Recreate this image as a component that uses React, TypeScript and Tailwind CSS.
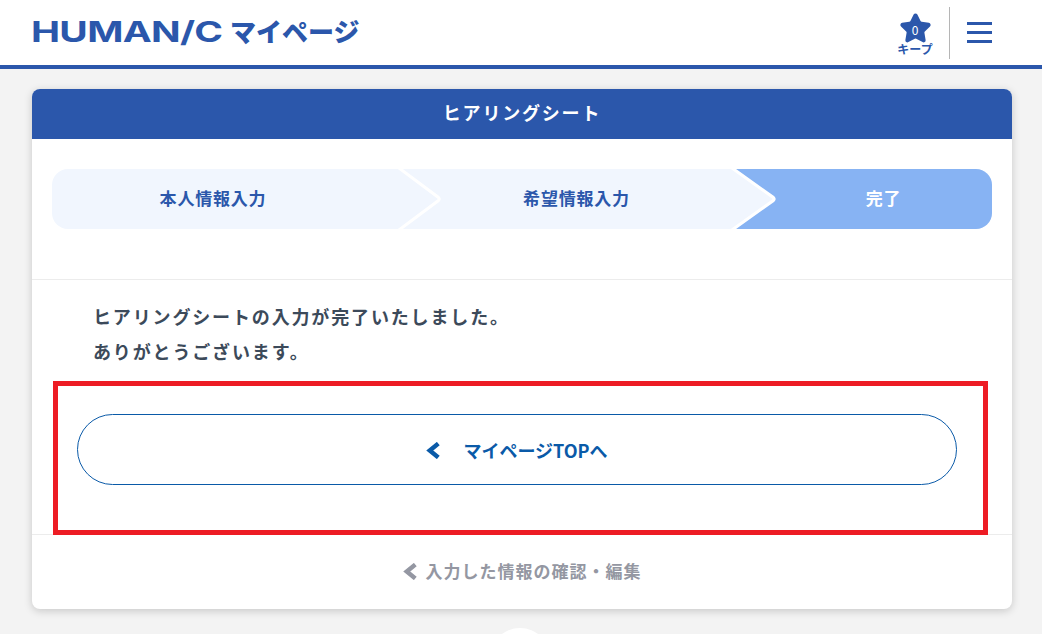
import { Star } from 'lucide-react'

const jp = "font-['Noto_Sans_CJK_JP','Noto_Sans',sans-serif]"

function Chevron({ className }: { className: string }) {
  return (
    <svg viewBox="0 0 14 16" className={className} fill="none">
      <path d="M11.5 1.5 3.5 8l8 6.5" stroke="currentColor" strokeWidth="4.2" strokeLinejoin="miter" />
    </svg>
  )
}

function StepArrow({ className, fill }: { className: string; fill: string }) {
  return (
    <svg viewBox="0 0 44 60" preserveAspectRatio="none" className={className}>
      <path
        d="M1 -1 40.5 28.5Q42 30 40.5 31.5L1 61"
        fill={fill}
        stroke="#ffffff"
        strokeWidth="3"
      />
    </svg>
  )
}

export default function App() {
  return (
    <div className={`${jp} relative h-[634px] w-[1042px] overflow-hidden bg-[#f3f3f3]`}>
      <header className="flex h-[69px] items-center justify-between border-b-4 border-[#2b57ab] bg-white pl-[31px] pr-[50px]">
        <div className="flex items-center text-[#2b57ab]">
          <div className="h-[40px] w-[199px] overflow-visible">
            <span className="inline-block origin-left -translate-y-px scale-x-[1.34] font-['Inter',sans-serif] text-[29px] font-bold leading-[40px] tracking-[-0.5px]">
              HUMAN/C
            </span>
          </div>
          <span className="pb-[3px] text-[26px] font-black leading-[40px]">マイページ</span>
        </div>
        <div className="flex items-center">
          <div className="relative flex w-[40px] translate-x-[1px] flex-col items-center text-[#2b57ab]">
            <Star className="mt-[3px] h-[33px] w-[33px]" fill="currentColor" strokeWidth={2} />
            <span className="absolute left-0 right-0 top-[13px] text-center text-[12px] leading-[16px] text-white">0</span>
            <span className="mt-[-3px] text-[12px] font-bold leading-[14px]">キープ</span>
          </div>
          <div className="ml-[15px] mr-[17px] h-[52px] w-px bg-[#b5b5b5]" />
          <div className="flex w-[25px] flex-col gap-[6px]">
            <div className="h-[3px] bg-[#2b57ab]" />
            <div className="h-[3px] bg-[#2b57ab]" />
            <div className="h-[3px] bg-[#2b57ab]" />
          </div>
        </div>
      </header>

      <main className="ml-[32px] mt-[20px] h-[520px] w-[980px] overflow-hidden rounded-[8px] bg-white shadow-[0_2px_8px_rgba(0,0,0,0.18)]">
        <h1 className="flex h-[50px] items-center justify-center bg-[#2b57ab] pb-[4px] text-[18px] font-bold tracking-[1.8px] text-white">
          ヒアリングシート
        </h1>

        <div className="h-[141px] border-b border-[#ececec] px-[20px] pt-[30px]">
          <div className="flex h-[60px] overflow-hidden rounded-[16px] bg-[#f1f6fe] text-[17px] font-bold tracking-[0.8px]">
            <div className="relative flex w-[349px] items-center justify-center pb-[3px] pr-[27px] text-[#2b57ab]">
              本人情報入力
              <StepArrow className="absolute left-[346px] top-0 z-10 h-[60px] w-[44px]" fill="#f1f6fe" />
            </div>
            <div className="relative flex w-[333px] items-center justify-center pb-[3px] pl-[18px] text-[#2b57ab]">
              希望情報入力
              <StepArrow className="absolute left-[330px] top-0 z-10 h-[60px] w-[46px]" fill="#f1f6fe" />
            </div>
            <div className="flex flex-1 items-center justify-center bg-[#87b3f3] pb-[3px] pl-[41px] text-white">完了</div>
          </div>
        </div>

        <div className="h-[255px] border-b border-[#ececec] pt-[19px]">
          <p className="pl-[61px] text-[18px] font-bold leading-[35px] tracking-[1.85px] text-[#3c4a5a]">
            ヒアリングシートの入力が完了いたしました。
            <br />
            ありがとうございます。
          </p>
          <a className="ml-[45px] mt-[45px] flex h-[71px] w-[880px] items-center justify-center gap-[22px] rounded-full border border-[#0a5aa8] pt-[1px] text-[18px] font-bold text-[#0a5aa8]">
            <Chevron className="h-[17px] w-[15px]" />
            <span>マイページTOPへ</span>
          </a>
        </div>

        <a className="flex h-[74px] items-center justify-center gap-[8px] pb-[2px] text-[17px] font-bold tracking-[1px] text-[#9497a2]">
          <Chevron className="h-[17px] w-[15px]" />
          <span>入力した情報の確認・編集</span>
        </a>
      </main>

      <div className="absolute left-[53px] top-[381px] h-[154px] w-[935px] border-[5px] border-[#ed1c24]" />
      <div className="absolute left-[490px] top-[628px] h-[60px] w-[60px] rounded-full bg-white" />
    </div>
  )
}
